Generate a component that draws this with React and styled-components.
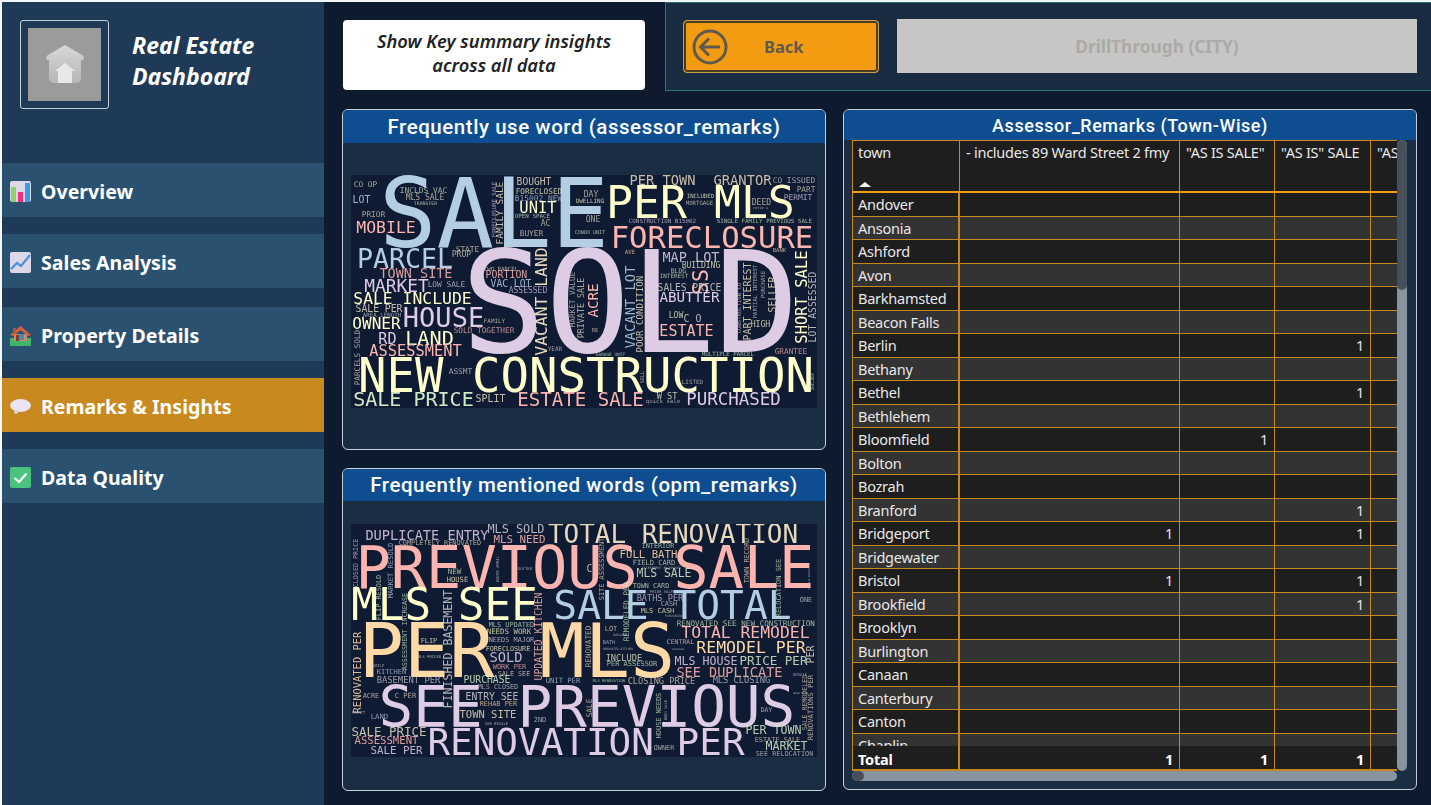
import React from 'react';
import styled, { createGlobalStyle } from 'styled-components';

const GlobalStyle = createGlobalStyle`
  html, body {
    margin: 0;
    padding: 0;
    background: #f4f6f8;
    overflow: hidden;
  }
  * {
    box-sizing: border-box;
  }
`;

const UI_FONT = `"Noto Sans", "Open Sans", sans-serif`;
const TITLE_FONT = `Roboto, "Noto Sans", sans-serif`;

const Page = styled.div`
  display: flex;
  width: 1429px;
  height: 803px;
  margin: 2px 0 0 2px;
  background: #0e1a2e;
  font-family: ${UI_FONT};
  overflow: hidden;
`;

const Sidebar = styled.aside`
  flex: 0 0 322px;
  display: flex;
  flex-direction: column;
  background: #1f3a57;
`;

const Brand = styled.div`
  display: flex;
  align-items: flex-start;
  height: 161px;
  padding: 18px 0 0 18px;
`;

const LogoFrame = styled.div`
  flex: 0 0 89px;
  height: 89px;
  padding: 7px;
  border: 1px solid #c3d0dc;
  border-radius: 3px;
`;

const LogoImage = styled.div`
  display: flex;
  align-items: center;
  justify-content: center;
  width: 73px;
  height: 73px;
  background: #9b9b9b;
`;

const BrandTitle = styled.h1`
  margin: 10px 0 0 23px;
  color: #fff;
  font-size: 23px;
  line-height: 31px;
  font-style: italic;
  font-weight: 700;
`;

const Nav = styled.nav`
  display: flex;
  flex-direction: column;
  gap: 17px;
`;

const NavItem = styled.div`
  display: flex;
  align-items: center;
  height: 54px;
  margin-top: ${(p) => p.$shift || 0}px;
  padding: 2px 0 0 8px;
  gap: 10px;
  background: ${(p) => (p.$active ? '#c8891e' : '#2a5270')};
  color: #fff;
  font-size: 19.5px;
  font-weight: 700;
  letter-spacing: 0.05px;
`;

const Main = styled.main`
  flex: 1;
  min-width: 0;
  display: flex;
  flex-direction: column;
`;

const TopRow = styled.div`
  display: flex;
  align-items: flex-start;
  height: 89px;
  padding-left: 19px;
`;

const InsightBox = styled.div`
  flex: 0 0 302px;
  height: 70px;
  margin-top: 18px;
  padding-bottom: 4px;
  display: flex;
  align-items: center;
  justify-content: center;
  background: #fff;
  border-radius: 4px;
  color: #222;
  font-size: 18.3px;
  line-height: 24px;
  font-style: italic;
  font-weight: 600;
  text-align: center;
`;

const ActionPanel = styled.div`
  flex: 1;
  height: 89px;
  margin-left: 20px;
  padding: 17px 14px 0 17px;
  display: flex;
  gap: 18px;
  align-items: flex-start;
  background: #1a2c42;
  border: 1px solid #2a7478;
  border-right: 0;
`;

const BackButton = styled.div`
  flex: 0 0 196px;
  height: 53px;
  display: flex;
  align-items: center;
  padding-left: 8px;
  background: #f39c12;
  border: 1px solid #c9a045;
  border-radius: 4px;
  box-shadow: inset 0 0 0 2px #4a3c22;
  color: #5f5a4e;
  font-size: 16.5px;
  font-weight: 700;
`;

const BackLabel = styled.span`
  margin-left: 36px;
`;

const DrillButton = styled.div`
  flex: 1;
  height: 54px;
  margin-top: -1px;
  display: flex;
  align-items: center;
  justify-content: center;
  background: #c8c6c4;
  color: #abaaa8;
  font-size: 17.3px;
  font-weight: 700;
`;

const Content = styled.div`
  flex: 1;
  min-height: 0;
  display: flex;
  gap: 17px;
  padding: 18px 0 0 18px;
`;

const LeftColumn = styled.div`
  flex: 0 0 484px;
  display: flex;
  flex-direction: column;
  gap: 18px;
`;

const Card = styled.section`
  height: ${(p) => p.$height}px;
  flex: ${(p) => (p.$grow ? '0 0 574px' : 'none')};
  background: #1b2d42;
  border: 1px solid #c3d0dc;
  border-radius: 6px;
  overflow: hidden;
`;

const CardHeader = styled.h2`
  height: ${(p) => p.$height}px;
  margin: 0;
  display: flex;
  align-items: center;
  justify-content: center;
  background: #0e4d8f;
  color: #fff;
  font-family: ${TITLE_FONT};
  font-size: ${(p) => p.$size}px;
  font-weight: 500;
  letter-spacing: 0.55px;
`;

const CloudFrame = styled.svg`
  display: block;
  width: 466px;
  height: 233px;
  margin: ${(p) => p.$top}px 0 0 8px;
  background: #0f1a33;
  filter: blur(0.35px);
`;

const TableArea = styled.div`
  display: grid;
  grid-template-columns: 545px 10px;
  grid-template-rows: 631px 10px;
  margin-left: 8px;
`;

const TableGrid = styled.div`
  display: flex;
  flex-direction: column;
  background: #1e1e1e;
  font-size: 14.5px;
  letter-spacing: -0.25px;
  color: #e8e8e8;
  overflow: hidden;
`;

const Row = styled.div`
  flex: none;
  display: grid;
  grid-template-columns: 108px 220px 95px 96px 26px;
  height: ${(p) => p.$height}px;
  background: ${(p) => (p.$striped ? '#333333' : '#1e1e1e')};
  border-bottom: 1px solid #c8861e;
`;

const HeaderRow = styled(Row)`
  border-top: 1px solid #c8861e;
  border-bottom: 2px solid #f39c12;
  background: #1e1e1e;
`;

const Cell = styled.div`
  padding: 0 6px;
  display: flex;
  align-items: center;
  justify-content: ${(p) => (p.$number ? 'flex-end' : 'flex-start')};
  border-right: 1px solid #c8861e;
  white-space: nowrap;
  overflow: hidden;
  &:first-child {
    padding-left: 5px;
    border-left: 1px solid #c8861e;
    border-right-width: 2px;
  }
  &:last-child {
    border-right: 0;
  }
`;

const HeaderCell = styled(Cell)`
  align-items: flex-start;
  padding-top: 1px;
  position: relative;
  &:first-child {
    border-right-width: 1px;
  }
`;

const SortArrow = styled.span`
  position: absolute;
  left: 6px;
  bottom: 4px;
  border-left: 6px solid transparent;
  border-right: 6px solid transparent;
  border-bottom: 5px solid #fff;
`;

const RowsBody = styled.div`
  flex: 1;
  min-height: 0;
  overflow: hidden;
`;

const TotalRow = styled(Row)`
  border-bottom: 2px solid #c8861e;
  background: #1e1e1e;
  color: #fff;
  font-weight: 700;
  & > div {
    padding-top: 2px;
  }
`;

const VerticalTrack = styled.div`
  background: #8a94a0;
  border-radius: 5px;
  overflow: hidden;
`;

const VerticalThumb = styled.div`
  height: 150px;
  background: #46505c;
  border-radius: 5px;
`;

const HorizontalTrack = styled.div`
  background: #8a94a0;
  border-radius: 5px;
  overflow: hidden;
`;

const HorizontalThumb = styled.div`
  width: 12px;
  height: 100%;
  background: #46505c;
  border-radius: 5px;
`;

const SvgWord = styled.text`
  font-family: "DejaVu Sans Mono", "Liberation Mono", monospace;
`;

// word clouds, coordinates are page pixels: [text, x, baseline, width, color, vertical]
const P = '#fbb4ae';
const B = '#b3cde3';
const G = '#ccebc5';
const L = '#decbe4';
const O = '#fed9a6';
const Y = '#ffffcc';
const T = '#e5d8bd';
const C = '#cfcfcf';

const ASSESSOR_WORDS = [
  ['SALE', 383, 247, 222, B],
  ['CO OP', 354, 187, 23, T],
  ['LOT', 353, 203, 17, B],
  ['INCLDS VAC', 400, 193, 47, G],
  ['MLS SALE', 406, 200, 38, T],
  ['TRANSFER', 414, 205, 23, G],
  ['PRIOR', 362, 217, 23, T],
  ['MOBILE', 357, 233, 58, P],
  ['FORECLOSURE SALE', 496, 237, 55, L, true],
  ['FAMILY SALE', 503, 244, 62, T, true],
  ['BOUGHT', 517, 185, 34, T],
  ['FORECLOSED', 516, 194, 46, Y],
  ['B15002 NEW', 515, 201, 47, B],
  ['UNIT', 520, 213, 36, Y],
  ['OPEN SPACE', 515, 218, 35, G],
  ['AC', 541, 226, 9, T],
  ['BUYER', 520, 236, 23, T],
  ['CONDO UNIT', 575, 234, 30, G],
  ['DWELLING', 576, 203, 28, Y],
  ['DAY', 584, 197, 14, T],
  ['ONE', 586, 222, 14, T],
  ['PER MLS', 608, 218, 185, Y],
  ['PER TOWN', 630, 185, 65, T],
  ['GRANTOR', 714, 185, 57, T],
  ['CO ISSUED', 773, 183, 42, C],
  ['PART', 797, 192, 18, T],
  ['PERMIT', 784, 200, 28, L],
  ['INCLUDED', 687, 198, 27, Y],
  ['MORTGAGE', 686, 205, 27, T],
  ['DEED', 752, 205, 19, T],
  ['ratio s', 753, 209, 15, C],
  ['CONSTRUCTION B15002', 629, 223, 67, L],
  ['SINGLE FAMILY PREVIOUS SALE', 717, 223, 95, G],
  ['FORECLOSURE', 612, 248, 200, P],
  ['AVE', 625, 254, 10, O],
  ['BANK', 773, 252, 13, O],
  ['MAP LOT', 663, 262, 56, L],
  ['BUILDING', 682, 268, 38, Y],
  ['BLDG', 671, 273, 15, G],
  ['INTEREST', 660, 278, 28, G],
  ['SOLD', 467, 352, 326, L],
  ['PARCEL', 358, 268, 94, B],
  ['STATE', 456, 252, 23, T],
  ['PROP', 452, 257, 19, T],
  ['TOWN SITE', 380, 278, 72, P],
  ['TWO PARCEL', 484, 271, 34, T],
  ['PORTION', 486, 278, 41, P],
  ['VAC LOT', 491, 287, 40, B],
  ['ASSESSED', 509, 293, 38, L],
  ['VACANT LAND', 547, 355, 107, T, true],
  ['MARKET', 365, 292, 63, L],
  ['LOW SALE', 428, 287, 37, C],
  ['SALE INCLUDE', 354, 304, 117, Y],
  ['SALE PER', 356, 312, 46, T],
  ['AREA LENGTH', 363, 317, 38, C],
  ['HOUSE', 404, 327, 79, L],
  ['OWNER', 353, 329, 47, Y],
  ['FAMILY', 484, 323, 21, T],
  ['SOLD TOGETHER', 454, 333, 60, P],
  ['RD', 379, 344, 17, L],
  ['LAND', 406, 345, 47, Y],
  ['ASSESSMENT', 370, 356, 91, P],
  ['PARCELS SOLD', 360, 385, 55, T, true],
  ['NEW CONSTRUCTION', 360, 392, 452, Y],
  ['SALE PRICE', 354, 406, 119, G],
  ['ASSMT', 449, 374, 23, C],
  ['SPLIT', 476, 402, 29, T],
  ['YEAR', 548, 351, 14, C],
  ['ESTATE SALE', 518, 406, 125, P],
  ['MARKET VALUE', 575, 327, 55, C, true],
  ['PRIVATE SALE', 584, 338, 60, T, true],
  ['ACRE', 598, 317, 33, P, true],
  ['RE', 592, 332, 6, T],
  ['VACANT LOT', 635, 348, 82, B, true],
  ['POOR CONDITION', 643, 352, 76, T, true],
  ['SS', 708, 294, 24, P, true],
  ['SALES PRICE', 658, 291, 63, C],
  ['ABUTTER', 660, 302, 59, L],
  ['LOW', 669, 318, 14, Y],
  ['C O', 684, 322, 17, C],
  ['ESTATE', 660, 336, 53, P],
  ['CONSTRUCTION CO', 741, 333, 50, C, true],
  ['PART INTEREST', 751, 340, 77, T, true],
  ['PARTIAL INTEREST', 757, 318, 53, C, true],
  ['PURCHASE', 765, 298, 27, C, true],
  ['HIGH', 751, 327, 19, Y],
  ['SELLER', 776, 312, 35, T, true],
  ['SHORT SALE', 807, 343, 92, Y, true],
  ['LOT ASSESSED', 816, 342, 70, C, true],
  ['GARAGE UNIT', 596, 356, 29, G],
  ['MULTIPLE PARCEL', 702, 356, 52, G],
  ['GRANTEE', 775, 354, 32, P],
  ['SELL', 644, 383, 12, T, true],
  ['LISTED', 682, 384, 21, C],
  ['W ST', 657, 399, 20, Y],
  ['quick sale', 646, 403, 34, C],
  ['PURCHASED', 687, 405, 93, L],
  ['INCLUDE', 814, 390, 17, C, true],
];

const OPM_WORDS = [
  ['DUPLICATE ENTRY', 366, 540, 122, L],
  ['MLS SOLD', 488, 533, 56, C],
  ['MLS NEED', 494, 543, 51, P],
  ['COMPLETELY RENOVATED', 399, 545, 82, T],
  ['TOTAL RENOVATION', 549, 543, 248, T],
  ['PREVIOUS SALE', 358, 588, 454, P],
  ['CLOSED PRICE', 358, 587, 48, C, true],
  ['MARKET RESOLD', 393, 598, 55, B, true],
  ['FLIP RESOLD', 381, 620, 45, G, true],
  ['NEW', 448, 574, 13, G],
  ['HOUSE', 447, 582, 21, Y],
  ['HOUSE APRIL', 499, 582, 26, C, true],
  ['GUTTED', 518, 570, 14, C],
  ['MLS SEE', 353, 620, 183, Y],
  ['SALE TOTAL', 555, 619, 235, B],
  ['UPDATED KITCHEN', 542, 680, 87, P, true],
  ['ASSESSMENT INCREASE', 407, 670, 77, G, true],
  ['FINISHED BASEMENT', 452, 708, 118, C, true],
  ['PER MLS', 362, 677, 310, O],
  ['RENOVATED PER', 361, 713, 81, O, true],
  ['FLIP', 421, 643, 16, Y],
  ['MLS PRICED', 418, 658, 23, G],
  ['MLS UPDATED', 489, 627, 45, G],
  ['NEEDS WORK', 487, 634, 44, Y],
  ['NEEDS MAJOR', 489, 642, 45, L],
  ['FORECLOSURE', 486, 651, 44, Y],
  ['SOLD', 490, 662, 32, L],
  ['WORK PER', 493, 669, 33, P],
  ['SALE SEE', 498, 676, 32, T],
  ['MOBILE', 371, 667, 13, C],
  ['KITCHEN', 377, 674, 29, B],
  ['BASEMENT PER', 377, 683, 63, C],
  ['PURCHASE', 464, 683, 46, G],
  ['MLS CLOSED', 478, 689, 40, C],
  ['UNIT PER', 546, 683, 34, B],
  ['ACRE', 363, 698, 16, T],
  ['C PER', 395, 698, 21, T],
  ['SEE PREVIOUS', 381, 727, 412, L],
  ['ENTRY SEE', 466, 700, 52, C],
  ['REHAB PER', 480, 706, 37, O],
  ['TOWN SITE', 460, 718, 56, T],
  ['SEE RESALE', 485, 725, 23, C],
  ['2ND', 534, 722, 12, C],
  ['PERMIT', 352, 714, 13, C],
  ['LAND', 371, 719, 17, B],
  ['SALE PRICE', 352, 736, 74, T],
  ['ASSESSMENT', 355, 744, 63, P],
  ['SALE PER', 371, 754, 51, L],
  ['RENOVATION PER', 429, 755, 314, L],
  ['INTERIOR', 642, 548, 32, G],
  ['FULL BATH', 620, 558, 57, O],
  ['FIELD CARD', 633, 565, 42, G],
  ['ASSESSMENT ENCREASED', 642, 569, 39, C],
  ['MLS SALE', 637, 577, 54, G],
  ['C', 587, 572, 5, C],
  ['SITE ASSESSMENT', 604, 600, 62, T, true],
  ['TOWN RECORD', 749, 583, 45, T, true],
  ['RELOCATION SEE', 781, 617, 58, G, true],
  ['COMPLETE RENOVATION', 810, 590, 27, C, true],
  ['ONE', 800, 602, 12, C],
  ['TOWN CARD', 633, 588, 36, G],
  ['PRIOR SALE', 650, 593, 23, C],
  ['BATHS PER', 637, 601, 46, L],
  ['CASH', 661, 606, 16, C],
  ['MLS CASH', 641, 613, 33, Y],
  ['PURCHASED', 665, 617, 17, C],
  ['REMODELED PER', 629, 641, 59, G, true],
  ['RENOVATED SEE NEW CONSTRUCTION', 677, 626, 138, G],
  ['LOT', 605, 631, 12, T],
  ['BUILDING', 613, 636, 14, C],
  ['TOTAL REMODEL', 682, 638, 127, P],
  ['BATH', 603, 644, 12, B],
  ['CENTRAL', 667, 644, 27, T],
  ['REMODEL PER', 697, 653, 108, O],
  ['ASSESSOR', 672, 650, 12, C],
  ['RENOVATED KITCHEN', 603, 650, 30, C],
  ['PER', 814, 663, 17, T, true],
  ['RENOVATED', 591, 667, 41, T, true],
  ['SALE', 592, 717, 18, T, true],
  ['INCLUDE', 606, 661, 36, Y],
  ['PER ASSESSOR', 607, 666, 50, G],
  ['MLS HOUSE', 675, 665, 62, L],
  ['PRICE PER', 740, 665, 67, G],
  ['SEE DUPLICATE', 677, 677, 105, P],
  ['UPDATE', 793, 676, 14, C],
  ['MLS RENOVATION', 593, 682, 32, G],
  ['CLOSING PRICE', 628, 684, 67, T],
  ['MLS CLOSING', 713, 683, 57, C],
  ['GOOD SALE', 793, 694, 15, C],
  ['DAY', 761, 712, 11, C],
  ['HOUSE NEEDS', 661, 738, 45, G, true],
  ['NEED SALE', 667, 720, 20, C, true],
  ['SALE REMODELED', 807, 730, 55, T, true],
  ['RENOVATIONS PER', 813, 740, 65, T, true],
  ['PER TOWN', 746, 734, 55, G],
  ['ESTATE SALE', 755, 742, 45, T],
  ['MARKET', 766, 750, 41, G],
  ['OWNER', 654, 750, 20, C],
  ['SEE RELOCATION', 756, 756, 57, C],
];

const TOWNS = [
  ['Andover'], ['Ansonia'], ['Ashford'], ['Avon'], ['Barkhamsted'], ['Beacon Falls'],
  ['Berlin', 0, 0, 1], ['Bethany'], ['Bethel', 0, 0, 1], ['Bethlehem'],
  ['Bloomfield', 0, 1, 0], ['Bolton'], ['Bozrah'], ['Branford', 0, 0, 1],
  ['Bridgeport', 1, 0, 1], ['Bridgewater'], ['Bristol', 1, 0, 1], ['Brookfield', 0, 0, 1],
  ['Brooklyn'], ['Burlington'], ['Canaan'], ['Canterbury'], ['Canton'], ['Chaplin'],
];

const wordOpacity = (size) => {
  if (size < 9) return 0.72;
  if (size < 14) return 0.86;
  return 1;
};

// measured widths are ink widths, so leave room for the side bearings of the mono font
const WordCloud = ({ words, originY, top }) => (
  <CloudFrame $top={top} viewBox={`351 ${originY} 466 233`}>
    {words.map(([text, x, y, width, color, vertical]) => {
      const advance = width / (text.length - 0.14);
      const bearing = advance * 0.07;
      const size = advance / 0.602;
      const startX = vertical ? x : x - bearing;
      const startY = vertical ? y + bearing : y;
      return (
        <SvgWord
          key={`${text}-${x}-${y}`}
          x={startX}
          y={startY}
          fontSize={size}
          fill={color}
          opacity={wordOpacity(size)}
          transform={vertical ? `rotate(-90 ${startX} ${startY})` : undefined}
        >
          {text}
        </SvgWord>
      );
    })}
  </CloudFrame>
);

const LogoHouse = () => (
  <svg width="40" height="44" viewBox="0 0 40 44">
    <defs>
      <linearGradient id="logoRoof" x1="0" y1="0" x2="0" y2="1">
        <stop offset="0" stopColor="#d8d8d8" />
        <stop offset="1" stopColor="#b6b6b6" />
      </linearGradient>
    </defs>
    <path d="M20 2 L37 12 Q40 14 38 17 L36 17 V35 Q36 40 31 40 H9 Q4 40 4 35 V17 L2 17 Q0 14 3 12 Z" fill="url(#logoRoof)" />
    <path d="M20 20 L30 28 H27 V40 H13 V28 H10 Z" fill="#e8e8e8" />
  </svg>
);

const ChartIcon = () => (
  <svg width="21" height="21" viewBox="0 0 21 21">
    <rect width="21" height="21" rx="2" fill="#dcd8e8" />
    <rect x="1" y="6" width="5" height="15" fill="#8bd46a" />
    <rect x="8" y="11" width="5" height="10" fill="#e8327c" />
    <rect x="15" y="2" width="5" height="19" fill="#3f9be0" />
  </svg>
);

const TrendIcon = () => (
  <svg width="21" height="21" viewBox="0 0 21 21">
    <rect width="21" height="21" rx="2" fill="#dcd8e8" />
    <path d="M1 17 L7 11 L11 14 L20 3" fill="none" stroke="#4a90d9" strokeWidth="2.2" />
  </svg>
);

const HouseIcon = () => (
  <svg width="21" height="21" viewBox="0 0 21 21">
    <rect x="0" y="13" width="21" height="8" fill="#3fb56b" />
    <path d="M4 9 H17 V16 H4 Z" fill="#c98d6a" />
    <path d="M0 10 L10.5 1 L21 10 L18 11 L10.5 5 L3 11 Z" fill="#d9603a" />
    <path d="M3 3 H6 V7 L3 9 Z" fill="#a8593c" />
    <rect x="9" y="9" width="5" height="6" fill="#4a87b8" />
    <rect x="6" y="10" width="3" height="6" fill="#7a3f2a" />
  </svg>
);

const BubbleIcon = () => (
  <svg width="21" height="21" viewBox="0 0 21 21">
    <ellipse cx="10.5" cy="9.5" rx="10.5" ry="6.5" fill="#ece4f4" />
    <circle cx="6" cy="16" r="2" fill="#dcd2e8" />
  </svg>
);

const CheckIcon = () => (
  <svg width="21" height="21" viewBox="0 0 21 21">
    <rect width="21" height="21" rx="2" fill="#4cc27f" />
    <path d="M4.5 11 L9 15 L16.5 6.5" fill="none" stroke="#fff" strokeWidth="2.2" />
  </svg>
);

const BackIcon = () => (
  <svg width="36" height="36" viewBox="0 0 36 36">
    <circle cx="18" cy="18" r="16" fill="none" stroke="#5f5a4e" strokeWidth="3" />
    <path d="M28 18 H9 M17 9.5 L8.5 18 L17 26.5" fill="none" stroke="#5f5a4e" strokeWidth="3" />
  </svg>
);

const NAV = [
  { label: 'Overview', icon: <ChartIcon /> },
  { label: 'Sales Analysis', icon: <TrendIcon /> },
  { label: 'Property Details', icon: <HouseIcon />, shift: 2 },
  { label: 'Remarks & Insights', icon: <BubbleIcon />, active: true },
  { label: 'Data Quality', icon: <CheckIcon /> },
];

export default function App() {
  return (
    <>
      <GlobalStyle />
      <Page>
        <Sidebar>
          <Brand>
            <LogoFrame>
              <LogoImage>
                <LogoHouse />
              </LogoImage>
            </LogoFrame>
            <BrandTitle>
              Real Estate
              <br />
              Dashboard
            </BrandTitle>
          </Brand>
          <Nav>
            {NAV.map((item) => (
              <NavItem key={item.label} $active={item.active} $shift={item.shift}>
                {item.icon}
                {item.label}
              </NavItem>
            ))}
          </Nav>
        </Sidebar>
        <Main>
          <TopRow>
            <InsightBox>
              Show Key summary insights
              <br />
              across all data
            </InsightBox>
            <ActionPanel>
              <BackButton>
                <BackIcon />
                <BackLabel>Back</BackLabel>
              </BackButton>
              <DrillButton>DrillThrough (CITY)</DrillButton>
            </ActionPanel>
          </TopRow>
          <Content>
            <LeftColumn>
              <Card $height={341}>
                <CardHeader $height={33} $size={20.5}>Frequently use word (assessor_remarks)</CardHeader>
                <WordCloud words={ASSESSOR_WORDS} originY={175} top={32} />
              </Card>
              <Card $height={323}>
                <CardHeader $height={32} $size={20.5}>Frequently mentioned words (opm_remarks)</CardHeader>
                <WordCloud words={OPM_WORDS} originY={524} top={23} />
              </Card>
            </LeftColumn>
            <Card $height={681} $grow>
              <CardHeader $height={30} $size={18}>Assessor_Remarks (Town-Wise)</CardHeader>
              <TableArea>
                <TableGrid>
                  <HeaderRow $height={53}>
                    <HeaderCell>
                      town
                      <SortArrow />
                    </HeaderCell>
                    <HeaderCell>- includes 89 Ward Street 2 fmy</HeaderCell>
                    <HeaderCell>"AS IS SALE"</HeaderCell>
                    <HeaderCell>"AS IS" SALE</HeaderCell>
                    <HeaderCell>"AS IS"</HeaderCell>
                  </HeaderRow>
                  <RowsBody>
                    {TOWNS.map(([town, a, b, c], i) => (
                      <Row key={town} $height={23.5} $striped={i % 2 === 1}>
                        <Cell>{town}</Cell>
                        <Cell $number>{a ? 1 : ''}</Cell>
                        <Cell $number>{b ? 1 : ''}</Cell>
                        <Cell $number>{c ? 1 : ''}</Cell>
                        <Cell />
                      </Row>
                    ))}
                  </RowsBody>
                  <TotalRow $height={25}>
                    <Cell>Total</Cell>
                    <Cell $number>1</Cell>
                    <Cell $number>1</Cell>
                    <Cell $number>1</Cell>
                    <Cell />
                  </TotalRow>
                </TableGrid>
                <VerticalTrack>
                  <VerticalThumb />
                </VerticalTrack>
                <HorizontalTrack>
                  <HorizontalThumb />
                </HorizontalTrack>
              </TableArea>
            </Card>
          </Content>
        </Main>
      </Page>
    </>
  );
}
